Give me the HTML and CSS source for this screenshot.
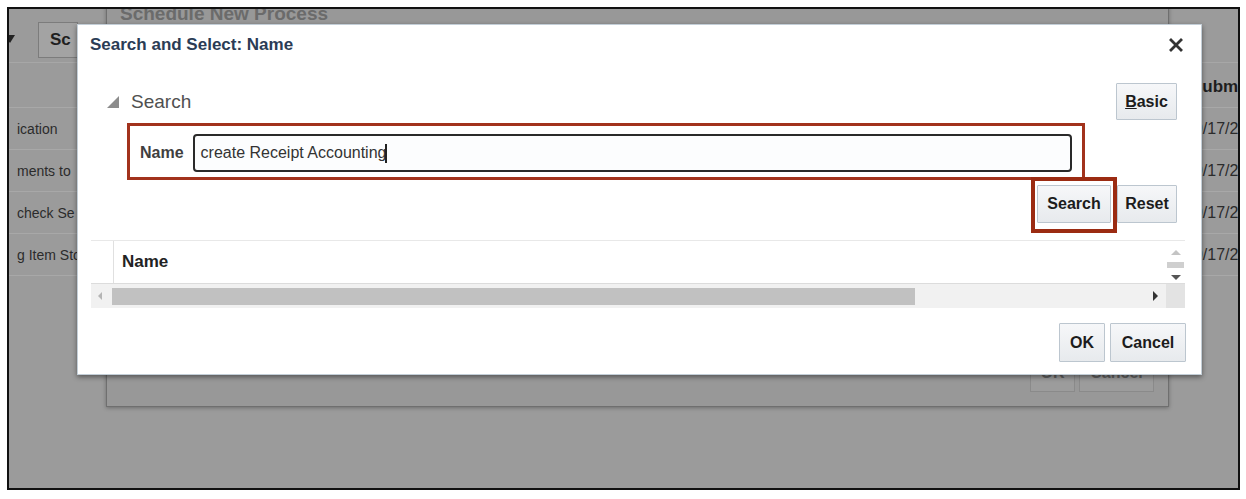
FILE: index.html
```html
<!DOCTYPE html>
<html lang="en">
<head>
  <meta charset="UTF-8" />
  <title>Search and Select: Name</title>
  <link rel="stylesheet" href="styles.css">
</head>
<body>

<div class="frame">
  <!-- page behind the dialogs -->
  <div class="page">
    <div class="toolbar">
      <span class="menu-caret"></span>
      <span class="page-btn">Sc</span>
    </div>
    <div class="row head">
      <span class="cell-l"></span>
      <span class="cell-r">Submitted</span>
    </div>
    <div class="row"><span class="cell-l">ication</span><span class="cell-r">09/17/2025</span></div>
    <div class="row"><span class="cell-l">ments to</span><span class="cell-r">09/17/2025</span></div>
    <div class="row"><span class="cell-l">check Se</span><span class="cell-r">09/17/2025</span></div>
    <div class="row"><span class="cell-l">g Item Sto</span><span class="cell-r">09/17/2025</span></div>
  </div>

  <!-- schedule dialog, dimmed -->
  <div class="back-dialog">
    <div class="back-title">Schedule New Process</div>
    <div class="back-foot">
      <span class="back-btn ok">OK</span>
      <span class="back-btn">Cancel</span>
    </div>
  </div>

  <!-- search and select popup -->
  <div class="dialog">
    <div class="dlg-head">
      <h1>Search and Select: Name</h1>
      <svg class="close" width="14" height="14" viewBox="0 0 14 14">
        <path d="M2 2 L12 12 M12 2 L2 12" stroke="#333" stroke-width="2.8" stroke-linecap="square" />
      </svg>
    </div>

    <div class="search-bar">
      <svg class="disclose" width="12" height="12" viewBox="0 0 12 12">
        <polygon points="12,0 12,12 0,12" fill="#8c8c8c" />
      </svg>
      <span class="search-label">Search</span>
      <button class="btn basic"><u>B</u>asic</button>
    </div>

    <div class="name-box">
      <label>Name</label>
      <div class="field">create Receipt Accounting<span class="cursor"></span></div>
    </div>

    <div class="action-row">
      <span class="mark"><button class="btn search">Search</button></span>
      <button class="btn reset">Reset</button>
    </div>

    <div class="results">
      <div class="res-head">
        <span class="stub"></span>
        <span class="col-name">Name</span>
      </div>
      <div class="vscroll">
        <span class="arr up"></span>
        <span class="vthumb"></span>
        <span class="arr down"></span>
      </div>
      <div class="hscroll">
        <span class="arr left"></span>
        <span class="hthumb"></span>
        <span class="arr right"></span>
      </div>
      <div class="corner"></div>
    </div>

    <div class="dlg-foot">
      <button class="btn ok">OK</button>
      <button class="btn cancel">Cancel</button>
    </div>
  </div>
</div>

</body>
</html>
```

FILE: styles.css
```css
* {
  box-sizing: border-box;
}
body {
  margin: 0;
  background: #fff;
  font-family: 'Liberation Sans', Arial, sans-serif;
}
.frame {
  position: relative;
  width: 1233px;
  height: 483px;
  margin: 7px 0 0 7px;
  border: 2px solid #111;
  background: #9b9b9b;
  overflow: hidden;
}

/* page behind */
.toolbar {
  height: 54px;
  display: flex;
  align-items: flex-start;
  padding-top: 13px;
  border-bottom: 1px solid #a7a7a7;
}
.menu-caret {
  width: 0;
  height: 0;
  margin: 13px 0 0 -4px;
  border-top: 8px solid #222;
  border-left: 5px solid transparent;
  border-right: 5px solid transparent;
}
.page-btn {
  margin-left: 23px;
  width: 40px;
  height: 36px;
  padding-left: 11px;
  display: flex;
  align-items: center;
  background: #a3a3a3;
  border: 1px solid #7c7c7c;
  font-size: 17px;
  font-weight: 700;
  color: #1f1f1f;
}
.row {
  height: 42px;
  display: flex;
  align-items: center;
  justify-content: space-between;
  border-bottom: 1px solid #a8a8a8;
  font-size: 14px;
  color: #2b2b2b;
}
.row.head {
  height: 45px;
  align-items: flex-end;
  padding-bottom: 10px;
}
.cell-l {
  padding-left: 8px;
  white-space: nowrap;
}
.cell-r {
  width: 53px;
  white-space: nowrap;
  font-size: 16px;
}
.row.head .cell-r {
  padding-left: 6px;
  font-size: 17px;
  font-weight: 700;
  color: #1e1e1e;
}

/* dimmed schedule dialog */
.back-dialog {
  position: absolute;
  left: 97px;
  top: -20px;
  width: 1063px;
  height: 418px;
  display: flex;
  flex-direction: column;
  background: #989898;
  border: 1px solid #6f6f6f;
  box-shadow: 0 1px 4px rgba(0,0,0,0.3);
}
.back-title {
  padding: 13px 0 0 13px;
  font-size: 19px;
  line-height: 22px;
  font-weight: 700;
  color: #6b6b6b;
}
.back-foot {
  margin-top: auto;
  display: flex;
  justify-content: flex-end;
  gap: 4px;
  padding: 0 14px 14px 0;
}
.back-btn {
  height: 36px;
  width: 75px;
  display: flex;
  align-items: flex-end;
  justify-content: center;
  padding-bottom: 9px;
  border: 1px solid #8a8a8a;
  background: #9c9c9c;
  font-size: 16px;
  font-weight: 700;
  color: #606060;
}
.back-btn.ok {
  width: 45px;
}

/* search and select popup */
.dialog {
  position: absolute;
  left: 68px;
  top: 15px;
  width: 1125px;
  height: 351px;
  background: #fff;
  border: 1px solid #c3ced7;
  box-shadow: 0 2px 5px rgba(0,0,0,0.45);
}
.dlg-head {
  height: 30px;
  display: flex;
  justify-content: space-between;
  align-items: flex-start;
  padding: 10px 18px 0 12px;
}
.dlg-head h1 {
  margin: 0;
  font-size: 17px;
  line-height: 20px;
  font-weight: 700;
  color: #2b3c55;
}
.close {
  margin-top: 3px;
}
.search-bar {
  margin-top: 28px;
  display: flex;
  align-items: center;
  padding: 0 24px 0 29px;
}
.disclose {
  margin-top: 1px;
}
.search-label {
  margin-left: 12px;
  font-size: 19px;
  color: #505050;
}
.btn {
  height: 38px;
  padding: 0;
  display: inline-flex;
  align-items: center;
  justify-content: center;
  border: 1px solid #bcc6cf;
  border-radius: 1px;
  background: linear-gradient(#f6f7f9, #e7eaed);
  font-family: 'Liberation Sans', Arial, sans-serif;
  font-size: 16px;
  font-weight: 700;
  color: #1c1c1c;
}
.btn.basic {
  margin-left: auto;
  width: 61px;
  height: 37px;
}
.name-box {
  margin: 3px 116px 0 49px;
  display: flex;
  align-items: center;
  padding: 8px 10px 5px 10px;
  border: 3px solid #a2321c;
}
.name-box label {
  font-size: 16px;
  font-weight: 700;
  color: #3f3f3f;
}
.field {
  flex: 1;
  margin-left: 9px;
  height: 38px;
  display: flex;
  align-items: center;
  padding: 0 6px;
  border: 2px solid #2a2a2a;
  border-radius: 4px;
  background: #fcfdfe;
  font-size: 16px;
  color: #333;
}
.cursor {
  width: 2px;
  height: 19px;
  margin-left: -1px;
  background: #222;
}
.action-row {
  margin-top: -3px;
  display: flex;
  justify-content: flex-end;
  align-items: flex-start;
  padding-right: 24px;
}
.mark {
  display: flex;
  padding: 4px 2px 6px 2px;
  border: 4px solid #9b2b12;
}
.btn.search {
  width: 74px;
}
.btn.reset {
  width: 60px;
  margin-top: 8px;
}
.results {
  margin: 7px 16px 0 13px;
  display: grid;
  grid-template-columns: 1fr 19px;
  grid-template-rows: 44px 24px;
}
.res-head {
  display: flex;
  border-top: 1px solid #e8e8e8;
  border-bottom: 1px solid #dcdcdc;
}
.stub {
  width: 23px;
  border-right: 1px solid #e0e0e0;
}
.col-name {
  padding-left: 8px;
  display: flex;
  align-items: center;
  font-size: 17px;
  font-weight: 700;
  color: #222;
}
.vscroll {
  display: flex;
  flex-direction: column;
  align-items: center;
  padding-top: 9px;
  border-top: 1px solid #e8e8e8;
  border-bottom: 1px solid #dcdcdc;
}
.arr {
  width: 0;
  height: 0;
}
.arr.up {
  border-bottom: 5px solid #c4c4c4;
  border-left: 5px solid transparent;
  border-right: 5px solid transparent;
}
.vthumb {
  width: 17px;
  height: 6px;
  margin-top: 7px;
  background: #cfcfcf;
}
.arr.down {
  margin-top: 7px;
  border-top: 5px solid #555;
  border-left: 5px solid transparent;
  border-right: 5px solid transparent;
}
.hscroll {
  display: flex;
  align-items: center;
  background: #f1f1f1;
}
.arr.left {
  margin-left: 7px;
  border-right: 4px solid #b5b5b5;
  border-top: 4px solid transparent;
  border-bottom: 4px solid transparent;
}
.hthumb {
  width: 803px;
  height: 17px;
  margin-left: 10px;
  background: #c1c1c1;
}
.arr.right {
  margin-left: auto;
  margin-right: 8px;
  border-left: 5px solid #333;
  border-top: 5px solid transparent;
  border-bottom: 5px solid transparent;
}
.corner {
  background: #e3e3e3;
}
.dlg-foot {
  margin-top: 15px;
  display: flex;
  justify-content: flex-end;
  gap: 5px;
  padding-right: 15px;
}
.btn.ok {
  width: 46px;
  height: 39px;
}
.btn.cancel {
  width: 76px;
  height: 39px;
}
```
